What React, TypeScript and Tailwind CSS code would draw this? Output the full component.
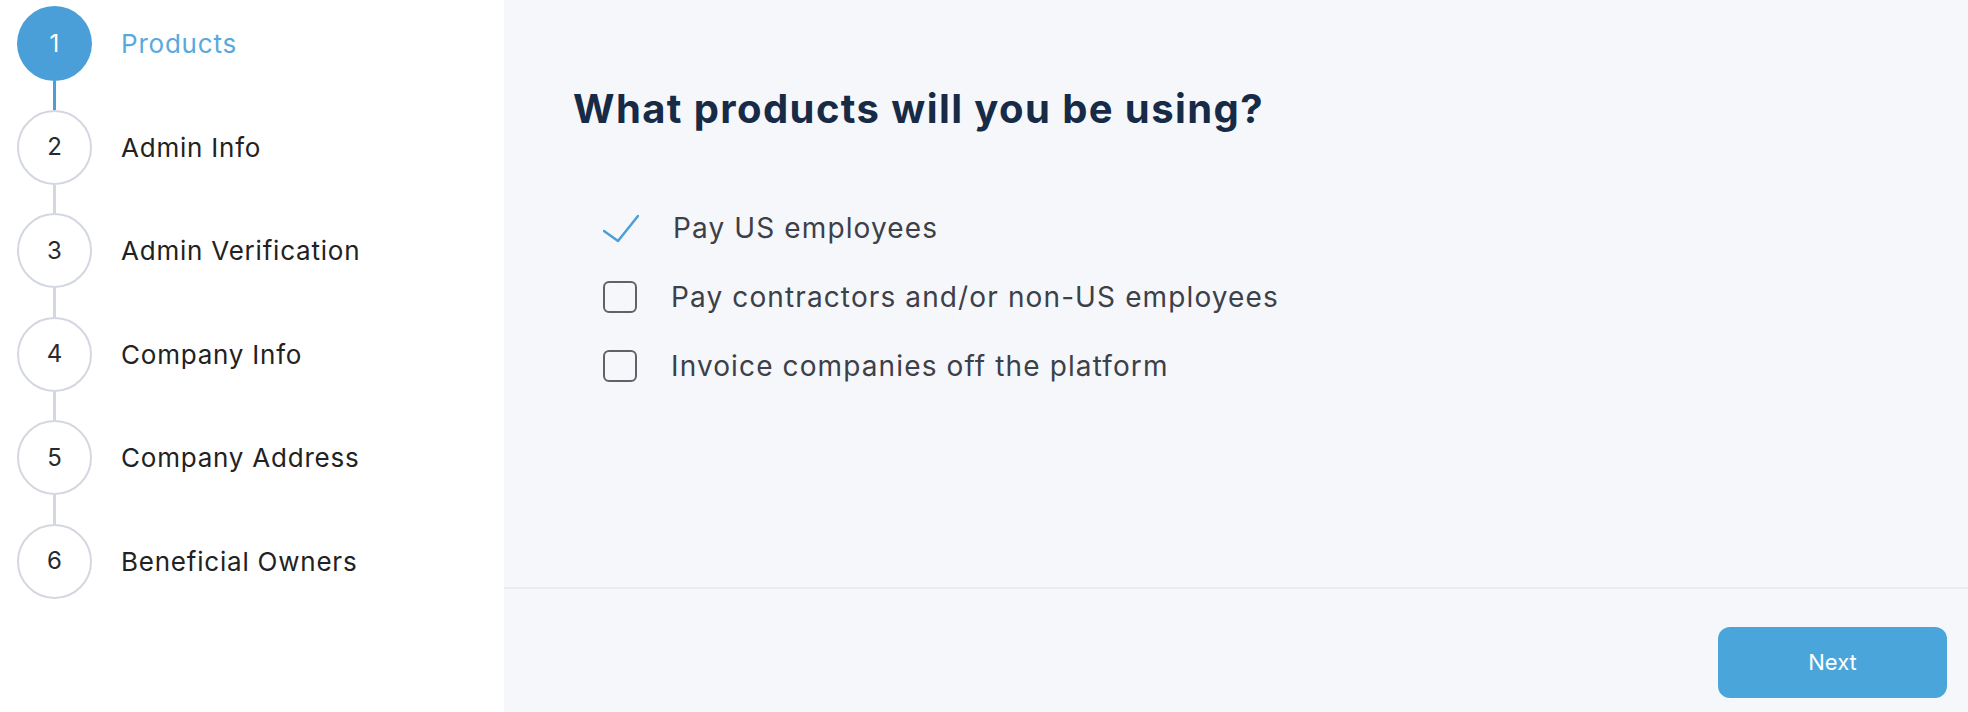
import React from 'react';

const steps = [
  'Products',
  'Admin Info',
  'Admin Verification',
  'Company Info',
  'Company Address',
  'Beneficial Owners',
];

const products = [
  { label: 'Pay US employees', checked: true },
  { label: 'Pay contractors and/or non-US employees', checked: false },
  { label: 'Invoice companies off the platform', checked: false },
];

export default function App() {
  return (
    <div className="flex h-[712px] w-full overflow-hidden font-['Inter',sans-serif]">
      {/* Steps sidebar */}
      <div className="w-[504px] shrink-0 bg-white pt-[6px] pl-[17px]">
        {steps.map((step, i) => {
          const active = i === 0;
          return (
            <div key={step}>
              <div className="flex items-center">
                <div
                  className={
                    active
                      ? 'flex h-[75px] w-[75px] items-center justify-center rounded-full bg-[#4a9fd8] text-[24px] text-white'
                      : 'flex h-[75px] w-[75px] items-center justify-center rounded-full border-2 border-[#d3d7e0] text-[24px] text-[#2a2a2a]'
                  }
                >
                  {i + 1}
                </div>
                <span
                  className={
                    active
                      ? 'ml-[29px] text-[26px] tracking-[0.03em] text-[#5aa9dd]'
                      : 'ml-[29px] text-[26px] tracking-[0.03em] text-[#222]'
                  }
                >
                  {step}
                </span>
              </div>
              {i < steps.length - 1 && (
                <div
                  className={
                    i === 0
                      ? 'ml-[36px] h-[28.5px] w-[3px] bg-[#4a9fd8]'
                      : 'ml-[36px] h-[28.5px] w-[3px] bg-[#d3d7e0]'
                  }
                />
              )}
            </div>
          );
        })}
      </div>

      {/* Main panel */}
      <div className="flex flex-1 flex-col bg-[#f5f7fb]">
        <div className="h-[587px] pl-[69px] pt-[85px]">
          <h1 className="text-[40px] leading-[48px] font-bold tracking-[0.035em] text-[#172b47]">
            What products will you be using?
          </h1>
          <div className="mt-[79px] flex flex-col gap-[37px] pl-[30px]">
            {products.map((p) => (
              <div key={p.label} className="flex h-[32px] items-center">
                {p.checked ? (
                  <svg width="36" height="32" viewBox="0 0 36 32" className="shrink-0">
                    <path d="M1 19 L15 29 L35 4" fill="none" stroke="#4a9fd8" strokeWidth="2.5" strokeLinecap="round" strokeLinejoin="round" />
                  </svg>
                ) : (
                  <div className="h-[32px] w-[34px] shrink-0 rounded-[6px] border-2 border-[#606268]" />
                )}
                <span className="ml-[34px] text-[28px] leading-[32px] tracking-[0.04em] text-[#3c4049]">{p.label}</span>
              </div>
            ))}
          </div>
        </div>
        <div className="flex flex-1 justify-end border-t-2 border-[#e9ebf0] pt-[38px] pr-[21px]">
          <button className="h-[71px] w-[229px] rounded-[12px] bg-[#4aa6da] text-[22px] text-white">
            Next
          </button>
        </div>
      </div>
    </div>
  );
}
